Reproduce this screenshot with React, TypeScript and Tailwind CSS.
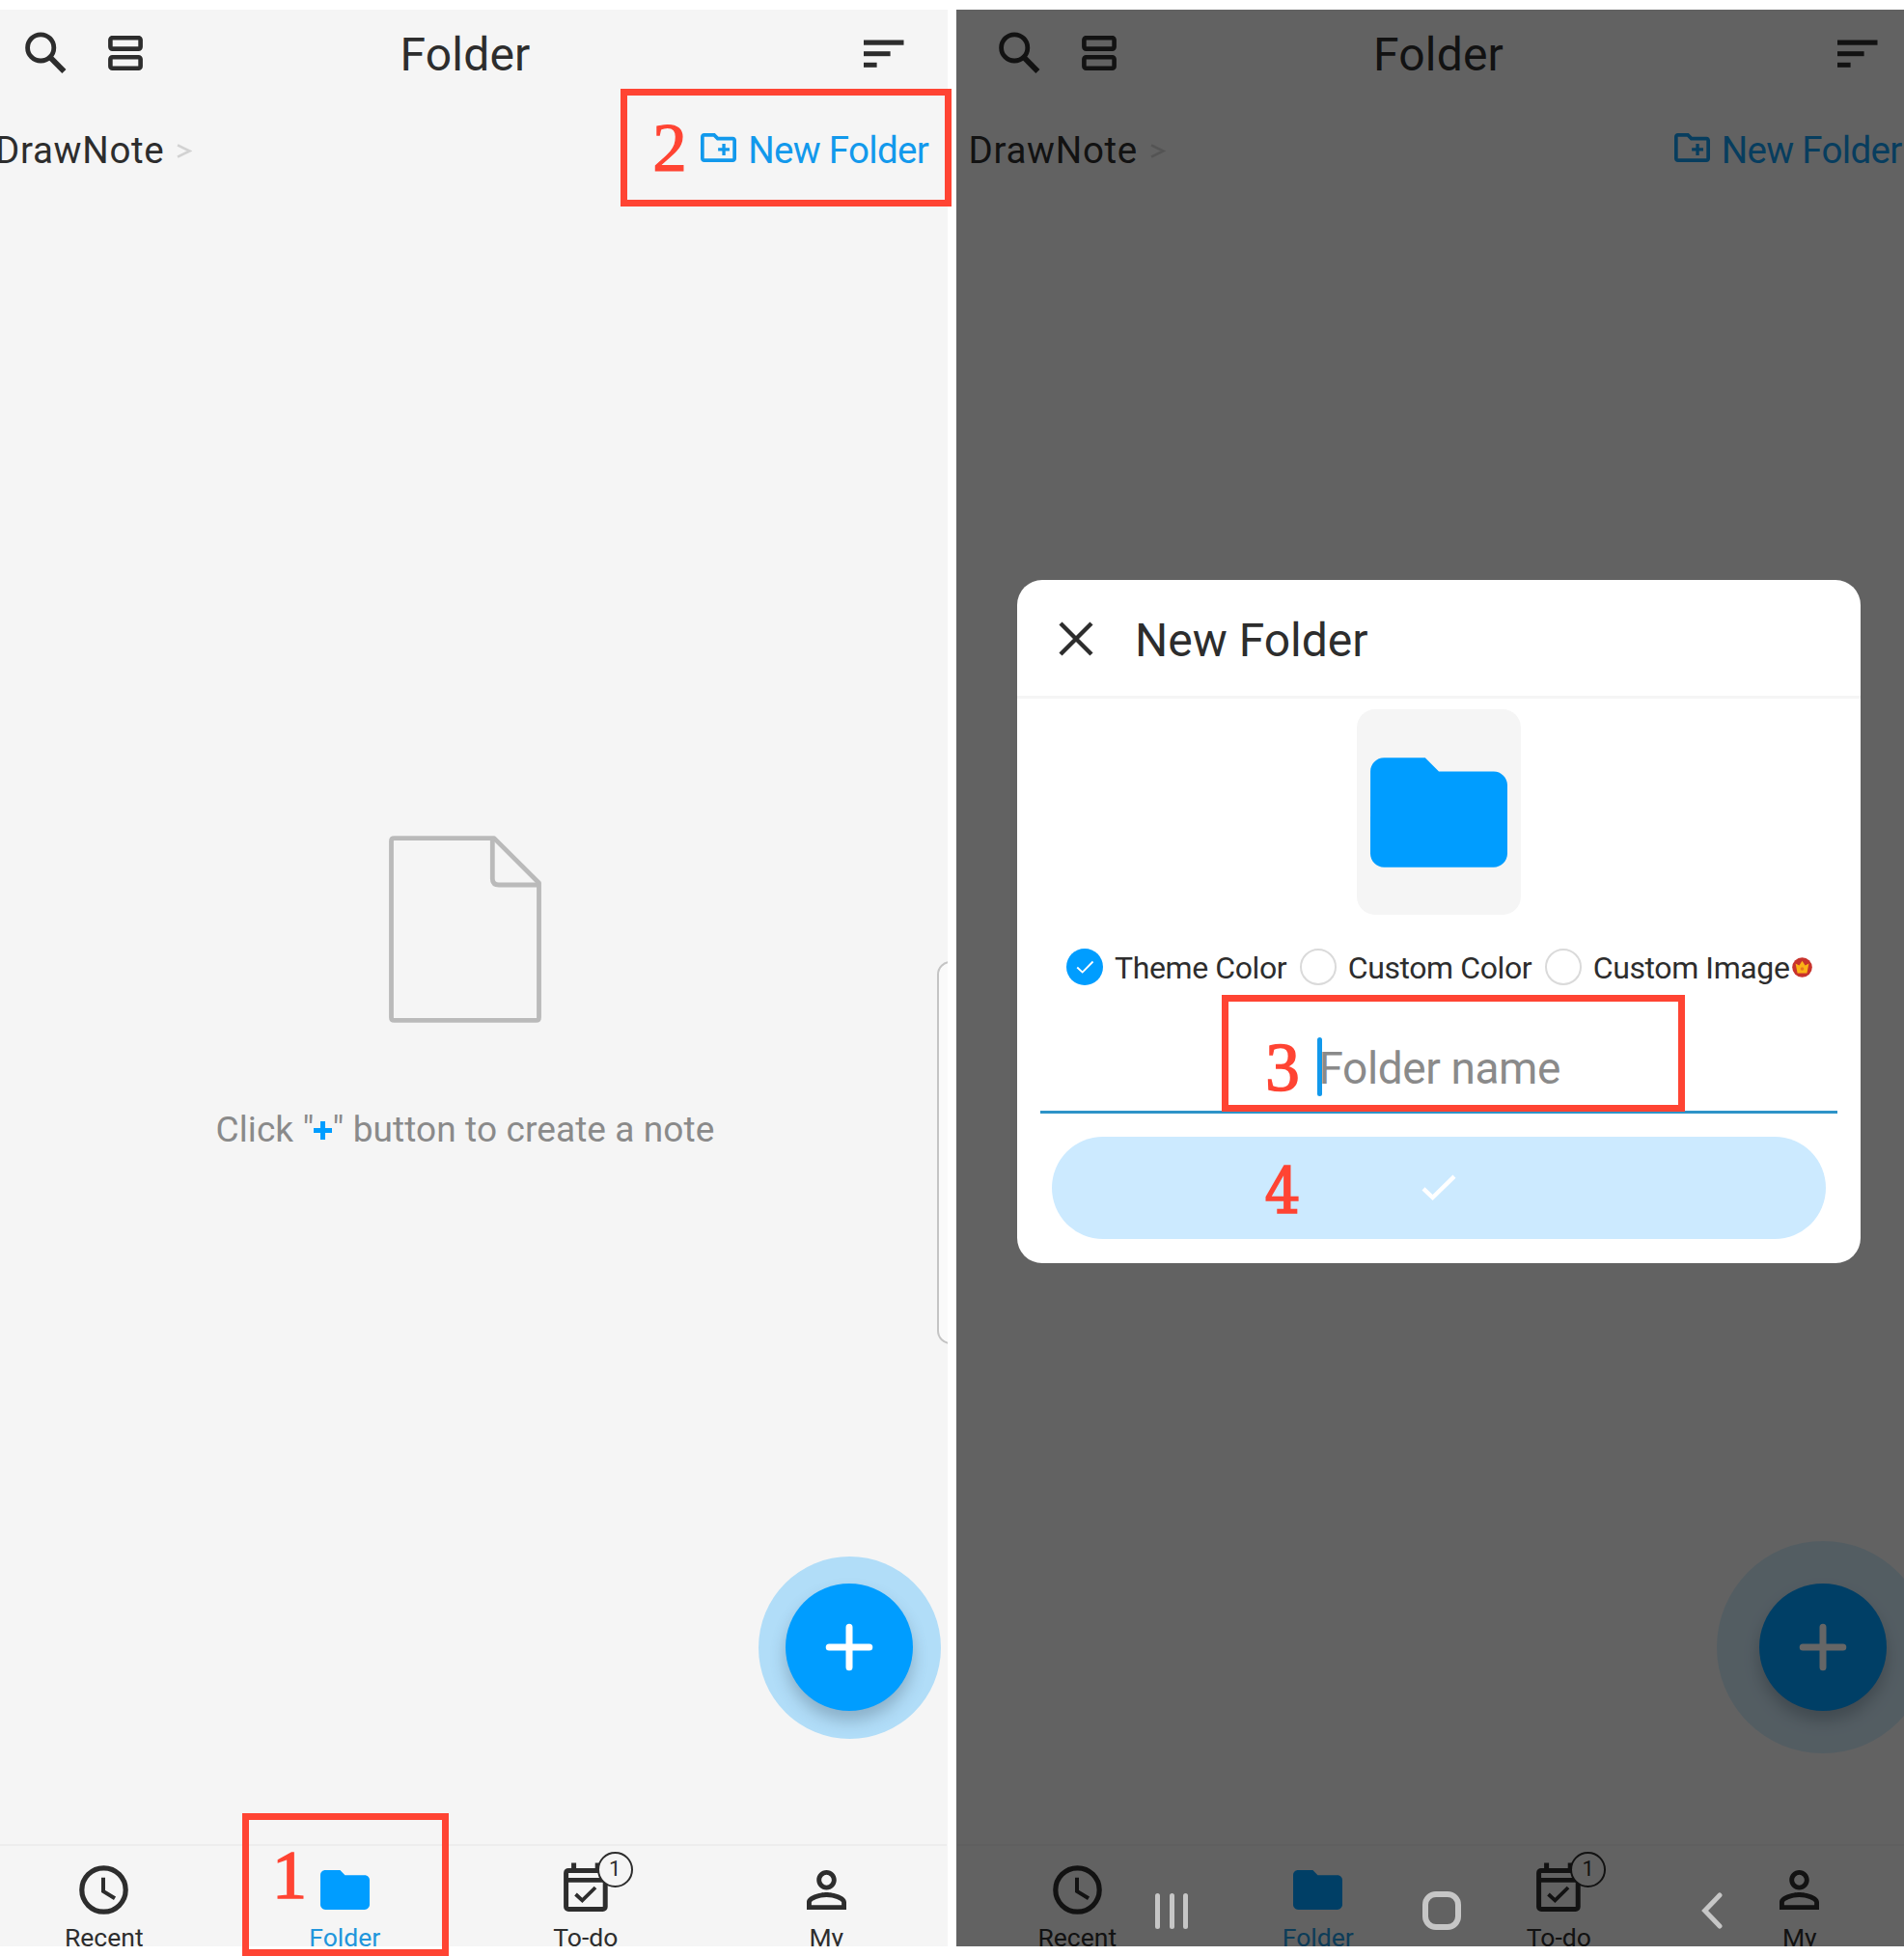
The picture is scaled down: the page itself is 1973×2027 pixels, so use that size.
import React from "react";

const SearchIcon = () => (
  <svg className="h-[44px] w-[44px]" viewBox="0 0 44 44" fill="none" stroke="currentColor">
    <circle cx="16.2" cy="16.4" r="13.6" strokeWidth="4.8" />
    <path d="M25.6 26 L40.4 41" strokeWidth="5.8" />
  </svg>
);

const RowsIcon = () => (
  <svg className="h-[36px] w-[36px]" viewBox="0 0 36 36" fill="none" stroke="currentColor" strokeWidth="4.6">
    <rect x="2.4" y="2.2" width="31.2" height="11.4" rx="2" />
    <rect x="2.4" y="22.3" width="31.2" height="11.4" rx="2" />
  </svg>
);

const SortIcon = () => (
  <svg className="h-[29px] w-[42px]" viewBox="0 0 42 29" fill="currentColor">
    <rect x="0" y="0.5" width="41.5" height="5.2" />
    <rect x="0" y="12.2" width="27.6" height="5" />
    <rect x="0" y="23.8" width="13.6" height="5" />
  </svg>
);

const NewFolderIcon = () => (
  <svg className="h-[30px] w-[37px]" viewBox="2 4 20 16" preserveAspectRatio="none" fill="currentColor">
    <path d="M20 6h-8l-2-2H4c-1.11 0-1.99.89-1.99 2L2 18c0 1.11.89 2 2 2h16c1.11 0 2-.89 2-2V8c0-1.11-.89-2-2-2zm0 12H4V6h5.17l2 2H20v10zm-8.2-4.1h2.3v2.3h1.8v-2.3h2.3v-1.8h-2.3V9.8h-1.8v2.3h-2.3z" />
  </svg>
);

const FolderShape = ({ className }: { className: string }) => (
  <svg className={className} viewBox="2 4 20 16" fill="currentColor">
    <path d="M10 4H4c-1.1 0-1.99.9-1.99 2L2 18c0 1.1.9 2 2 2h16c1.1 0 2-.9 2-2V8c0-1.1-.9-2-2-2h-8l-2-2z" />
  </svg>
);

const ClockIcon = () => (
  <svg className="h-[51px] w-[51px]" viewBox="0 0 51 51" fill="none" stroke="currentColor">
    <circle cx="25.5" cy="25.5" r="22.7" strokeWidth="5.2" />
    <path d="M25 12.8 V27 L37 34.3" strokeWidth="4" />
  </svg>
);

const CalendarIcon = () => (
  <svg className="h-[51px] w-[46px]" viewBox="0 0 46 51" fill="none" stroke="currentColor">
    <rect x="2.6" y="8.4" width="40.6" height="40" rx="2.5" strokeWidth="5" />
    <path d="M2.6 18.4 H43" strokeWidth="4.6" />
    <path d="M10.6 0.5 V8 M35.2 0.5 V8" strokeWidth="5" />
    <path d="M12.5 33 L19.4 39.4 L33 26" strokeWidth="3.8" />
  </svg>
);

const PersonIcon = () => (
  <svg className="h-[41px] w-[41px]" viewBox="4 4 16 16" fill="currentColor">
    <path d="M12 5.9a2.1 2.1 0 1 1 0 4.2 2.1 2.1 0 0 1 0-4.2m0 9c2.97 0 6.1 1.46 6.1 2.1v1.1H5.9V17c0-.64 3.13-2.1 6.1-2.1M12 4C9.79 4 8 5.79 8 8s1.79 4 4 4 4-1.79 4-4-1.79-4-4-4zm0 9c-2.67 0-8 1.34-8 4v3h16v-3c0-2.66-5.33-4-8-4z" />
  </svg>
);

function Tab({ label, active, children }: { label: string; active?: boolean; children: React.ReactNode }) {
  return (
    <div className={"flex flex-1 flex-col items-center " + (active ? "text-[#009dff]" : "text-[#2d2d2d]")}>
      <div className="mt-[14px] flex h-[62px] shrink-0 items-center justify-center">{children}</div>
      <div className={"mt-[2px] shrink-0 text-[26.5px] leading-[34px] " + (active ? "text-[#2196dc]" : "")}>{label}</div>
    </div>
  );
}

function Phone({ contentClass, haloClass, empty, showHandle, children }: {
  contentClass: string;
  haloClass: string;
  empty?: boolean;
  showHandle?: boolean;
  children?: React.ReactNode;
}) {
  return (
    <section className="relative h-[2007px] w-[982px] shrink-0 overflow-hidden bg-[#f5f5f5] text-[#2d2d2d]">
      <div className={"relative flex h-full w-[998px] flex-col " + contentClass}>
        <header className="grid h-[92px] grid-cols-[1fr_auto_1fr] items-center pl-[43px] pr-[44px]">
          <div className="flex items-center gap-[42px] pb-[2px]">
            <SearchIcon />
            <RowsIcon />
          </div>
          <h1 className="pl-[1px] pt-[2px] text-[48px] leading-none tracking-[0.2px]">Folder</h1>
          <div className="flex justify-end pb-[2px]">
            <SortIcon />
          </div>
        </header>
        <div className="flex h-[106px] items-center justify-between pl-[12px] pr-[19px] text-[38.5px] leading-none">
          <div className="flex items-center pt-[2px]">
            <span className="tracking-[0.7px]">DrawNote</span>
            <svg className="ml-[13px] h-[15px] w-[16px]" viewBox="0 0 16 15" fill="none" stroke="#d2d2d2" strokeWidth="2.6">
              <path d="M1 1.4 L13.5 7.5 L1 13.6" />
            </svg>
          </div>
          <div className="flex items-center text-[#1299ec]">
            <span className="pb-[4px]"><NewFolderIcon /></span>
            <span className="ml-[12px] pt-[2px] tracking-[-0.7px]">New Folder</span>
          </div>
        </div>
        <main className="flex flex-1 flex-col items-center pt-[658px]">
          {empty && (
            <>
              <svg className="h-[194px] w-[158px]" viewBox="0 0 158 194" fill="none" stroke="#bababa" strokeWidth="4.8" strokeLinejoin="round">
                <path d="M109 2.6 H5.5 Q2.5 2.6 2.5 5.6 V188.4 Q2.5 191.4 5.5 191.4 H152.5 Q155.5 191.4 155.5 188.4 V49 Z" />
                <path d="M107.3 3 V44.5 Q107.3 51 113.8 51 H155" />
              </svg>
              <p className="mt-[89px] flex items-center whitespace-pre text-[37px] leading-[44px] tracking-[0.1px] text-[#8a8a8a]">
                <span>Click "</span>
                <svg className="h-[19px] w-[19px]" viewBox="0 0 19 19" stroke="#009dff" strokeWidth="5">
                  <path d="M9.5 0 V19 M0 9.5 H19" />
                </svg>
                <span>" button to create a note</span>
              </p>
            </>
          )}
        </main>
        <nav className="flex h-[106px] border-t-2 border-[#ededed]">
          <Tab label="Recent"><ClockIcon /></Tab>
          <Tab label="Folder" active><FolderShape className="h-[41px] w-[51px]" /></Tab>
          <Tab label="To-do">
            <div className="relative -top-[3px]">
              <CalendarIcon />
              <span className="absolute -top-[11px] left-[35px] flex h-[37px] w-[37px] items-center justify-center rounded-full border-2 border-[#2d2d2d] bg-[#f5f5f5] text-[22px] leading-none">1</span>
            </div>
          </Tab>
          <Tab label="My"><PersonIcon /></Tab>
        </nav>
        <div className="absolute left-[787px] top-[1587px] flex h-[220px] w-[220px] items-center justify-center">
          <div className={"flex items-center justify-center rounded-full " + haloClass}>
            <button className="flex h-[132px] w-[132px] items-center justify-center rounded-full bg-[#009dff] shadow-[0_10px_16px_rgba(60,80,100,0.32)]">
              <svg className="h-[50px] w-[50px]" viewBox="0 0 50 50" stroke="#fff" strokeWidth="7" strokeLinecap="round">
                <path d="M25 4.2 V45.8 M4.2 25 H45.8" />
              </svg>
            </button>
          </div>
        </div>
      </div>
      {showHandle && (
        <div className="absolute left-[971px] top-[986px] h-[397px] w-[30px] rounded-[14px] border-2 border-[#c4c4c4] bg-[#fafafa]" />
      )}
      {children}
    </section>
  );
}

function Option({ label, checked }: { label: string; checked?: boolean }) {
  return (
    <div className="flex items-center gap-[12px]">
      {checked ? (
        <span className="flex h-[38px] w-[38px] items-center justify-center rounded-full bg-[#009dff]">
          <svg className="h-[15px] w-[19px]" viewBox="0 0 20 16" fill="none" stroke="#fff" strokeWidth="2">
            <path d="M1.2 8 L7 13.4 L18.6 1.6" />
          </svg>
        </span>
      ) : (
        <span className="h-[38px] w-[38px] rounded-full border-2 border-[#dadada]" />
      )}
      <span className="pt-[2px] tracking-[-0.4px]">{label}</span>
    </div>
  );
}

function NewFolderDialog() {
  return (
    <div className="absolute left-[63px] top-[591px] flex h-[708px] w-[874px] flex-col items-center rounded-[26px] bg-white">
      <div className="flex h-[123px] w-full items-center border-b-[3px] border-[#f5f5f5] pl-[43px] pt-[1px]">
        <svg className="h-[36px] w-[36px]" viewBox="0 0 36 36" stroke="#2d2d2d" strokeWidth="4.4">
          <path d="M2 2 L34 34 M34 2 L2 34" />
        </svg>
        <h2 className="ml-[43px] pt-[4px] text-[48px] leading-none">New Folder</h2>
      </div>
      <div className="mt-[11px] flex h-[213px] w-[170px] items-center justify-center rounded-[19px] bg-[#f5f5f5] text-[#009dff]">
        <FolderShape className="h-[114px] w-[142px]" />
      </div>
      <div className="mt-[35px] flex h-[38px] w-full items-center gap-[13.5px] pl-[51px] text-[32px] leading-none">
        <Option label="Theme Color" checked />
        <Option label="Custom Color" />
        <div className="flex items-center">
          <Option label="Custom Image" />
          <svg className="ml-[3px] h-[21px] w-[21px]" viewBox="0 0 21 21">
            <circle cx="10.5" cy="10.5" r="10.3" fill="#c8322c" />
            <path d="M3.6 6.4 L7.4 8.6 L10.5 3.8 L13.6 8.6 L17.4 6.4 L15.4 16.4 H5.6 Z" fill="#fbb116" />
            <circle cx="10.5" cy="12" r="1.8" fill="#e8761e" />
          </svg>
        </div>
      </div>
      <div className="mt-[29px] flex h-[104px] w-[826px] items-center justify-center border-b-[3px] border-[#2e94c8] pt-[12px] text-[46px] leading-none text-[#8a8a8a]">
        <span className="-mr-[3px] mb-[3px] h-[61px] w-[4.5px] rounded-full bg-[#1299ec]" />
        <span className="tracking-[-0.4px]">Folder name</span>
      </div>
      <button className="mt-[24px] flex h-[106px] w-[802px] items-center justify-center rounded-full bg-[#cceaff]">
        <svg className="h-[28px] w-[36px]" viewBox="0 0 36 28" fill="none" stroke="#fff" strokeWidth="4.4">
          <path d="M2 14.8 L11.6 24 L34 2.2" />
        </svg>
      </button>
    </div>
  );
}

function SystemNav() {
  return (
    <div className="absolute inset-x-0 bottom-[17px] flex h-[40px] items-center text-[#c6c6c6]">
      <div className="ml-[206px] flex h-[37px] gap-[9.6px]">
        <span className="w-[5px] rounded-full bg-current" />
        <span className="w-[5px] rounded-full bg-current" />
        <span className="w-[5px] rounded-full bg-current" />
      </div>
      <span className="ml-[242.5px] h-[40px] w-[40px] rounded-[14px] border-[6px] border-current" />
      <svg className="ml-[249px] h-[40px] w-[23px]" viewBox="0 0 23 40" fill="none" stroke="currentColor" strokeWidth="5" strokeLinecap="round">
        <path d="M19 4 L3.6 20 L19 36" />
      </svg>
    </div>
  );
}

const Frame = ({ className }: { className: string }) => (
  <div className={"absolute border-[7px] border-[#ff4433] " + className} />
);

const Step = ({ n, className }: { n: number; className: string }) => (
  <span className={"absolute w-[40px] text-center leading-[72px] text-[#ff4433] " + className}>{n}</span>
);

export default function App() {
  return (
    <div className="relative flex h-[2027px] w-[1973px] gap-[9px] overflow-hidden bg-white pt-[10px] font-['Roboto',sans-serif]">
      <Phone contentClass="-ml-[17px]" haloClass="h-[189px] w-[189px] bg-[#009dff]/28" empty showHandle />
      <Phone contentClass="ml-[0.5px]" haloClass="h-[220px] w-[220px] bg-[#009dff]/15">
        <div className="absolute inset-0 bg-black/60" />
        <NewFolderDialog />
        <SystemNav />
      </Phone>

      <Frame className="left-[643px] top-[92px] h-[122px] w-[343px]" />
      <Frame className="left-[251px] top-[1879px] h-[148px] w-[214px]" />
      <Frame className="left-[1266px] top-[1031px] h-[121px] w-[480px]" />
      <Step n={1} className="left-[280px] top-[1907px] font-['Liberation_Serif',serif] text-[72px] [-webkit-text-stroke:1.6px_#ff4433]" />
      <Step n={2} className="left-[674px] top-[117px] font-['Liberation_Serif',serif] text-[71px] [-webkit-text-stroke:1.2px_#ff4433]" />
      <Step n={3} className="left-[1309px] top-[1070px] font-['Liberation_Serif',serif] text-[71px] [-webkit-text-stroke:1.6px_#ff4433]" />
      <Step n={4} className="left-[1309px] top-[1199px] font-['DejaVu_Serif_Condensed','DejaVu_Serif',serif] text-[65px] [font-stretch:condensed] [-webkit-text-stroke:1.6px_#ff4433]" />
    </div>
  );
}
